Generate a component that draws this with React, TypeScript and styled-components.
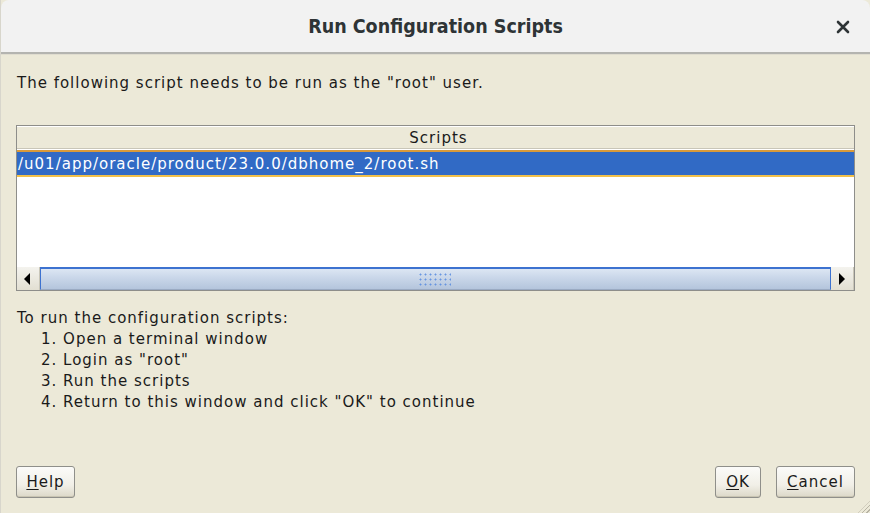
import React from "react";
import styled, { createGlobalStyle } from "styled-components";

const Global = createGlobalStyle`
  html, body { margin: 0; padding: 0; background: #ece9d8; }
  #root { width: 870px; height: 513px; }
`;

const Window = styled.div`
  width: 870px;
  height: 513px;
  display: flex;
  flex-direction: column;
  background: #ece9d8;
  box-sizing: border-box;
  border-left: 1px solid #d8d6cc;
  position: relative;
  overflow: hidden;
  font-family: "DejaVu Sans", sans-serif;
  color: #1a1a1a;
`;

const TitleBar = styled.div`
  height: 52px;
  flex: none;
  background: #f2f2f2;
  border-radius: 8px 8px 0 0;
  border-bottom: 2px solid #b4b4b0;
  display: flex;
  align-items: center;
  justify-content: center;
  position: relative;
  box-shadow: 0 1px 0 #e0ddd0;
`;

const Title = styled.div`
  font-family: "DejaVu Sans Condensed", "DejaVu Sans", sans-serif;
  font-weight: bold;
  font-size: 19.5px;
  color: #2e3436;
`;

const Close = styled.div`
  position: absolute;
  right: 20px;
  top: 19px;
  width: 14px;
  height: 14px;
`;

const Body = styled.div`
  flex: 1;
  display: flex;
  flex-direction: column;
  padding: 18px 15px 15px 15px;
  font-size: 15px;
  letter-spacing: 1px;
`;

const Intro = styled.div`
  padding-left: 1px;
  height: 22px;
  line-height: 22px;
`;

const Table = styled.div`
  margin-top: 31px;
  height: 166px;
  box-sizing: border-box;
  border: 1px solid #8e8e8a;
  display: flex;
  flex-direction: column;
  background: #fff;
`;

const Header = styled.div`
  height: 23px;
  flex: none;
  background: #ece9d8;
  border-bottom: 1px solid #c9c6b8;
  border-top: 1px solid #fff;
  display: flex;
  align-items: center;
  justify-content: center;
  box-sizing: border-box;
  padding-left: 6px;
`;

const SelectedRow = styled.div`
  height: 27px;
  flex: none;
  margin-top: 1px;
  background: #316ac5;
  color: #fff;
  box-sizing: border-box;
  border-top: 2px solid #d99a3b;
  border-bottom: 2px solid #f2c04a;
  display: flex;
  align-items: center;
  padding-left: 1px;
`;

const Empty = styled.div`
  flex: 1;
  background: #fff;
`;

const ScrollBar = styled.div`
  height: 23px;
  flex: none;
  display: flex;
  background: #ece9d8;
  border-top: 1px solid #fff;
`;

const ArrowButton = styled.div`
  width: 22px;
  flex: none;
  background: linear-gradient(#f4f3ee, #e2dfd2);
  border-right: 1px solid #c9c6b8;
  display: flex;
  align-items: center;
  justify-content: center;
`;

const Track = styled.div`
  flex: 1;
  background: linear-gradient(#dce6f3 0%, #cbd8ea 40%, #b4c5dc 100%);
  border: 1px solid #3d72d0;
  border-top: 2px solid #3d72d0;
  border-bottom: 1px solid #9aaac2;
  display: flex;
  align-items: center;
  justify-content: center;
`;

const Grip = styled.div`
  width: 33px;
  height: 14px;
  background-image: radial-gradient(circle, #5b8ee0 0.9px, transparent 1.1px);
  background-size: 5px 5px;
  opacity: 0.9;
  margin-right: 2px;
`;

const Instructions = styled.div`
  margin-top: 17px;
  padding-left: 1px;
  line-height: 21px;
`;

const Step = styled.div`
  padding-left: 24px;
`;

const Spacer = styled.div`
  flex: 1;
`;

const ButtonRow = styled.div`
  display: flex;
  align-items: center;
  gap: 15px;
`;

const Button = styled.button<{ $w: number }>`
  height: 32px;
  width: ${(p) => p.$w}px;
  padding: 0;
  font-family: "DejaVu Sans", sans-serif;
  font-size: 15px;
  letter-spacing: 1px;
  color: #1a1a1a;
  border: 1px solid #8f8f8a;
  border-radius: 3px;
  background: linear-gradient(#fbfbf9 0%, #f1efe7 60%, #dcd8c8 100%);
  box-shadow: inset 0 -1px 0 #c8c4b2;
  cursor: default;
`;

const U = styled.span`
  text-decoration: underline;
  text-underline-offset: 2px;
`;

const Grow = styled.div`
  flex: 1;
`;

const Resize = styled.div`
  position: absolute;
  right: 0;
  bottom: 0;
  width: 12px;
  height: 12px;
  background: repeating-linear-gradient(135deg, transparent 0 2px, #b8b4a4 2px 3px);
  clip-path: polygon(100% 0, 100% 100%, 0 100%);
`;

export default function App() {
  return (
    <>
      <Global />
      <Window>
        <TitleBar>
          <Title>Run Configuration Scripts</Title>
          <Close>
            <svg width="14" height="14" viewBox="0 0 14 14">
              <path d="M2 2 L12 12 M12 2 L2 12" stroke="#2e3436" strokeWidth="2.6" strokeLinecap="round" />
            </svg>
          </Close>
        </TitleBar>
        <Body>
          <Intro>The following script needs to be run as the "root" user.</Intro>
          <Table>
            <Header>Scripts</Header>
            <SelectedRow>/u01/app/oracle/product/23.0.0/dbhome_2/root.sh</SelectedRow>
            <Empty />
            <ScrollBar>
              <ArrowButton>
                <svg width="8" height="12" viewBox="0 0 8 12">
                  <path d="M6 0 L0 6 L6 12 Z" fill="#000" />
                </svg>
              </ArrowButton>
              <Track>
                <Grip />
              </Track>
              <ArrowButton>
                <svg width="8" height="12" viewBox="0 0 8 12">
                  <path d="M1 0 L7 6 L1 12 Z" fill="#000" />
                </svg>
              </ArrowButton>
            </ScrollBar>
          </Table>
          <Instructions>
            <div>To run the configuration scripts:</div>
            <Step>1. Open a terminal window</Step>
            <Step>2. Login as "root"</Step>
            <Step>3. Run the scripts</Step>
            <Step>4. Return to this window and click "OK" to continue</Step>
          </Instructions>
          <Spacer />
          <ButtonRow>
            <Button $w={59}>
              <U>H</U>elp
            </Button>
            <Grow />
            <Button $w={46}>
              <U>O</U>K
            </Button>
            <Button $w={79}>
              <U>C</U>ancel
            </Button>
          </ButtonRow>
        </Body>
        <Resize />
      </Window>
    </>
  );
}
